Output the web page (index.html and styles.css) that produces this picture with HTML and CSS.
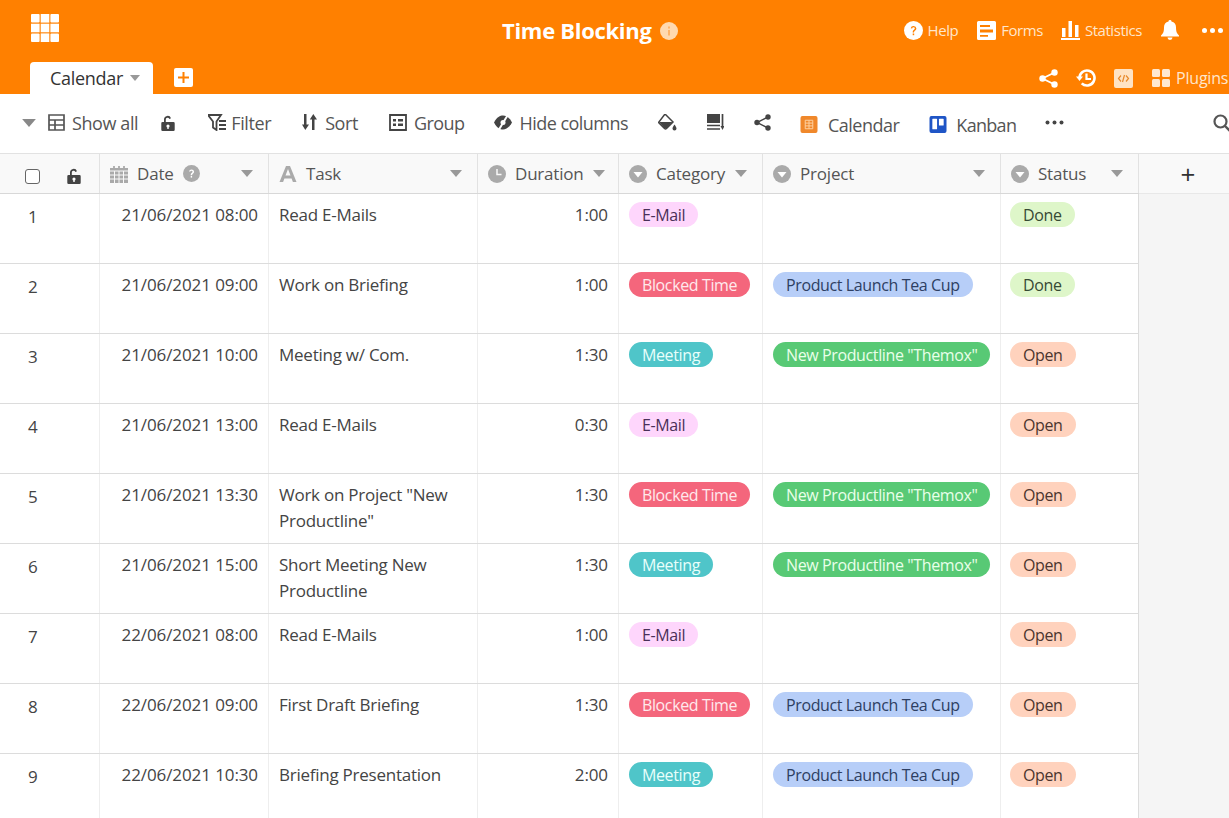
FILE: index.html
```html
<!DOCTYPE html>
<html lang="en">
<head>
<meta charset="utf-8">
<title>Time Blocking</title>
<link rel="stylesheet" href="styles.css">
</head>
<body>
<svg class="defs" width="0" height="0">
  <symbol id="caret" viewBox="0 0 12 7"><path d="M0 0h12L6 7z" fill="currentColor"/></symbol>
  <symbol id="single" viewBox="0 0 18 18"><circle cx="9" cy="9" r="9" fill="currentColor"/><path d="M4.500 7h9L9 12.500z" fill="#fff"/></symbol>
  <symbol id="lock" viewBox="0 0 14 16"><path d="M3 7V4.500a3.600 3.600 0 0 1 7-1.200l-1.700.6A1.800 1.800 0 0 0 4.800 4.500V7H12.500a1.200 1.200 0 0 1 1.200 1.200v6.600a1.200 1.200 0 0 1-1.200 1.200h-11A1.200 1.200 0 0 1 .3 14.800V8.200A1.200 1.200 0 0 1 1.500 7z" fill="currentColor"/><circle cx="7" cy="11" r="1.600" fill="#fff"/><rect x="6.300" y="11" width="1.400" height="3" fill="#fff"/></symbol>
</svg>

<header class="topbar">
  <div class="top-row">
    <svg class="app-grid" viewBox="0 0 28 28"><g fill="#fff"><rect width="8.600" height="8.600" rx="1"/><rect x="9.700" width="8.600" height="8.600"/><rect x="19.400" width="8.600" height="8.600" rx="1"/><rect y="9.700" width="8.600" height="8.600"/><rect x="9.700" y="9.700" width="8.600" height="8.600"/><rect x="19.400" y="9.700" width="8.600" height="8.600"/><rect y="19.400" width="8.600" height="8.600" rx="1"/><rect x="9.700" y="19.400" width="8.600" height="8.600"/><rect x="19.400" y="19.400" width="8.600" height="8.600" rx="1"/></g></svg>
    <h1 class="title">Time Blocking</h1>
    <svg class="title-info" viewBox="0 0 18 18"><circle cx="9" cy="9" r="9" fill="#ffd9b0"/><rect x="8" y="8" width="2" height="5.500" fill="#ffb469"/><rect x="8" y="4.500" width="2" height="2" fill="#ffb469"/></svg>
    <nav class="top-actions">
      <span class="act act-help"><svg class="ic-19" viewBox="0 0 19 19"><circle cx="9.500" cy="9.500" r="9.500" fill="#fff"/><path d="M6.700 7.300a2.900 2.900 0 0 1 5.700.3c0 2-2.400 2-2.400 4H8.700c0-2.800 2.100-2.800 2.100-4a1.300 1.300 0 0 0-2.600-.1z" fill="#ff8000"/><rect x="8.700" y="12.500" width="1.500" height="1.700" fill="#ff8000"/></svg>Help</span>
      <span class="act act-forms"><svg class="ic-19" viewBox="0 0 19 19"><path fill-rule="evenodd" d="M1.500 0h16A1.500 1.500 0 0 1 19 1.500v16a1.500 1.500 0 0 1-1.500 1.500h-16A1.500 1.500 0 0 1 0 17.500v-16A1.500 1.500 0 0 1 1.500 0zM3 4v2h10V4zM3 8.500v3h13v-3zM3 14v1.800h8V14z" fill="#fff"/></svg>Forms</span>
      <span class="act act-stats"><svg class="ic-19" viewBox="0 0 19 19"><g fill="#fff"><rect x="1" y="7" width="3.500" height="9"/><rect x="7.500" y="0" width="3.500" height="16"/><rect x="14" y="4" width="3.500" height="12"/><rect y="17" width="19" height="2"/></g></svg>Statistics</span>
      <svg class="bell" viewBox="0 0 18 20"><path d="M9 0a1.500 1.500 0 0 1 1.500 1.600A6 6 0 0 1 15 7.500c0 4.500 1 6 3 8v1H0v-1c2-2 3-3.500 3-8a6 6 0 0 1 4.500-5.900A1.500 1.500 0 0 1 9 0zM6.500 17.500h5a2.500 2.500 0 0 1-5 0z" fill="#fff"/></svg>
      <svg class="dots-w" viewBox="0 0 21 5"><g fill="#fff"><circle cx="2.500" cy="2.500" r="2.500"/><circle cx="10.500" cy="2.500" r="2.500"/><circle cx="18.500" cy="2.500" r="2.500"/></g></svg>
    </nav>
  </div>
  <div class="tab-row">
    <div class="tab">Calendar<svg class="tab-caret"><use href="#caret"/></svg></div>
    <svg class="tab-add" viewBox="0 0 19 19"><rect width="19" height="19" rx="2" fill="#fff"/><path d="M8.500 4h2v4.500H15v2h-4.500V15h-2v-4.500H4v-2h4.500z" fill="#ff8000"/></svg>
    <div class="tab-tools">
      <svg class="share-w" viewBox="0 0 19 19"><g fill="#fff"><circle cx="15.500" cy="3.500" r="3.200"/><circle cx="3.500" cy="9.500" r="3.200"/><circle cx="15.500" cy="15.500" r="3.200"/></g><path d="M15.500 3.500l-12 6 12 6" fill="none" stroke="#fff" stroke-width="1.800"/></svg>
      <svg class="hist-w" viewBox="0 0 20 20"><path d="M3.500 10a7.500 7.500 0 1 1 2.200 5.300" fill="none" stroke="#fff" stroke-width="2.600"/><path d="M0 8.500h7L3.500 13z" fill="#fff"/><path d="M10.500 5.500V11H15" fill="none" stroke="#fff" stroke-width="2.200"/></svg>
      <svg class="code-w" viewBox="0 0 19 19"><rect width="19" height="19" rx="2" fill="#ffe3c4"/><path d="M7 6.500L4.500 9.500 7 12.500M12 6.500l2.500 3-2.500 3M10.500 6l-2 7" fill="none" stroke="#e88a2c" stroke-width="1.200"/></svg>
      <span class="act act-plugins"><svg class="plug-w" viewBox="0 0 18 18"><g fill="#ffe8d0"><rect width="8" height="8" rx="1.500"/><rect x="10" width="8" height="8" rx="1.500"/><rect y="10" width="8" height="8" rx="1.500"/><rect x="10" y="10" width="8" height="8" rx="1.500"/></g></svg>Plugins</span>
    </div>
  </div>
</header>

<section class="toolbar">
  <svg class="tb-caret"><use href="#caret"/></svg>
  <span class="tool t-show"><svg class="tb-ic" viewBox="0 0 17 17"><path d="M1 1h15v15H1zM1 6h15M1 11h15M7 6v10" fill="none" stroke="currentColor" stroke-width="1.700"/></svg>Show all</span>
  <svg class="t-lock"><use href="#lock"/></svg>
  <span class="tool t-filter"><svg class="tb-ic-w" viewBox="0 0 18 17"><path d="M0 1h13L8.500 7.500V16L5 13.500V7.500z" fill="none" stroke="currentColor" stroke-width="1.800"/><path d="M11 7h7M11 11h7M11 15h7" stroke="currentColor" stroke-width="2"/></svg>Filter</span>
  <span class="tool t-sort"><svg class="tb-ic-s" viewBox="0 0 15 17"><path d="M2 0h2.500v10.500H7L3.300 16 0 10.500h2zM10 16h2.500V5.500H15L11.300 0 7.800 5.500H10z" fill="currentColor"/></svg>Sort</span>
  <span class="tool t-group"><svg class="tb-ic-w" viewBox="0 0 18 17"><path d="M1 1h16v15H1z" fill="none" stroke="currentColor" stroke-width="1.800"/><path d="M4 5h3v2.500H4zM9 5h5v2.500H9zM4 9.500h3V12H4zM9 9.500h5V12H9z" fill="currentColor"/></svg>Group</span>
  <span class="tool t-hide"><svg class="tb-ic-w" viewBox="0 0 18 14"><path d="M0 7C3 1.500 6 0 9 0s6 1.500 9 7c-3 5.500-6 7-9 7S3 12.500 0 7z" fill="currentColor"/><path d="M13.500 0L5 14" stroke="#fff" stroke-width="2"/><circle cx="9" cy="7" r="2.500" fill="#fff"/></svg>Hide columns</span>
  <svg class="t-paint" viewBox="0 0 19 17"><path d="M7 0l8 8-6.500 6.500a1.500 1.500 0 0 1-2 0L.5 8.500z" fill="none" stroke="#444" stroke-width="1.500"/><path d="M1 8h13.500l-6 6.300a1.500 1.500 0 0 1-2 0z" fill="#444"/><path d="M16.500 10.500c1.300 2 2 3 2 4a2 2 0 0 1-4 0c0-1 .7-2 2-4z" fill="#444"/></svg>
  <svg class="t-rowh" viewBox="0 0 17 17"><rect width="13" height="9" fill="#444"/><path d="M0 11.500h13M0 15h13" stroke="#444" stroke-width="1.500"/><path d="M15.500 0v13" stroke="#444" stroke-width="1.700"/><path d="M13.500 12h4l-2 4z" fill="#444"/></svg>
  <svg class="t-share" viewBox="0 0 17 17"><g fill="#444"><circle cx="14" cy="3" r="2.700"/><circle cx="3" cy="8.500" r="2.700"/><circle cx="14" cy="14" r="2.700"/></g><path d="M14 3L3 8.500 14 14" fill="none" stroke="#444" stroke-width="1.400"/></svg>
  <span class="tool t-cal"><svg class="tb-ic-w" viewBox="0 0 18 18"><rect width="18" height="18" rx="2" fill="#f0882b"/><path d="M5 4.500h8v9H5zM9 4.500v9M5 7.500h8M5 10.500h8" fill="none" stroke="#ffd3a6" stroke-width="1"/></svg>Calendar</span>
  <span class="tool t-kan"><svg class="tb-ic-w" viewBox="0 0 18 18"><rect width="18" height="18" rx="2" fill="#1f55c6"/><rect x="3" y="3" width="5" height="11" rx=".6" fill="#fff"/><rect x="10" y="3" width="5" height="7" rx=".6" fill="#fff"/></svg>Kanban</span>
  <svg class="t-dots" viewBox="0 0 19 5"><g fill="#444"><circle cx="2.500" cy="2.500" r="2"/><circle cx="9.500" cy="2.500" r="2"/><circle cx="16.500" cy="2.500" r="2"/></g></svg>
  <svg class="t-search" viewBox="0 0 18 18"><circle cx="7.500" cy="7.500" r="6" fill="none" stroke="#555" stroke-width="2.200"/><path d="M12 12l5 5" stroke="#555" stroke-width="2.400"/></svg>
</section>

<main class="sheet">
  <div class="table">
    <div class="row head">
      <div class="hc hc-index"><span class="checkbox"></span><svg class="hc-lock"><use href="#lock"/></svg></div>
      <div class="hc"><svg class="hi" viewBox="0 0 18 18"><path d="M0 3h18v15H0z" fill="currentColor"/><path d="M4 1v3M9 1v3M14 1v3" stroke="currentColor" stroke-width="1.800"/><path d="M0 6h18M0 10h18M0 14h18M4.500 6v12M9 6v12M13.500 6v12" stroke="#f9f9f9" stroke-width="1"/></svg>Date<svg class="hq" viewBox="0 0 17 17"><circle cx="8.500" cy="8.500" r="8.500" fill="currentColor"/><path d="M6 6.500a2.600 2.600 0 0 1 5.100.2c0 1.800-2 1.800-2 3.500H7.700c0-2.500 1.900-2.500 1.900-3.500a1.200 1.200 0 0 0-2.300-.1z" fill="#fff"/><rect x="7.700" y="11" width="1.400" height="1.600" fill="#fff"/></svg><svg class="hc-caret"><use href="#caret"/></svg></div>
      <div class="hc"><svg class="hi" viewBox="0 0 18 18"><path d="M7 1h4l6.500 16h-3.600l-1.300-3.500H5.400L4.100 17H.5zM6.500 10.500h5L9 4z" fill="currentColor" fill-rule="evenodd"/></svg>Task<svg class="hc-caret"><use href="#caret"/></svg></div>
      <div class="hc"><svg class="hi" viewBox="0 0 18 18"><circle cx="9" cy="9" r="9" fill="currentColor"/><path d="M9 4v5.500h4.500" fill="none" stroke="#f9f9f9" stroke-width="1.500"/></svg>Duration<svg class="hc-caret"><use href="#caret"/></svg></div>
      <div class="hc"><svg class="hi"><use href="#single"/></svg>Category<svg class="hc-caret"><use href="#caret"/></svg></div>
      <div class="hc"><svg class="hi"><use href="#single"/></svg>Project<svg class="hc-caret"><use href="#caret"/></svg></div>
      <div class="hc"><svg class="hi"><use href="#single"/></svg>Status<svg class="hc-caret"><use href="#caret"/></svg></div>
    </div>

    <div class="row"><div class="c idx">1</div><div class="c date">21/06/2021 08:00</div><div class="c task">Read E-Mails</div><div class="c dur">1:00</div><div class="c"><span class="pill email">E-Mail</span></div><div class="c"></div><div class="c st"><span class="pill done">Done</span></div></div>
    <div class="row"><div class="c idx">2</div><div class="c date">21/06/2021 09:00</div><div class="c task">Work on Briefing</div><div class="c dur">1:00</div><div class="c"><span class="pill blocked">Blocked Time</span></div><div class="c"><span class="pill tea">Product Launch Tea Cup</span></div><div class="c st"><span class="pill done">Done</span></div></div>
    <div class="row"><div class="c idx">3</div><div class="c date">21/06/2021 10:00</div><div class="c task">Meeting w/ Com.</div><div class="c dur">1:30</div><div class="c"><span class="pill meeting">Meeting</span></div><div class="c"><span class="pill themox">New Productline "Themox"</span></div><div class="c st"><span class="pill open">Open</span></div></div>
    <div class="row"><div class="c idx">4</div><div class="c date">21/06/2021 13:00</div><div class="c task">Read E-Mails</div><div class="c dur">0:30</div><div class="c"><span class="pill email">E-Mail</span></div><div class="c"></div><div class="c st"><span class="pill open">Open</span></div></div>
    <div class="row"><div class="c idx">5</div><div class="c date">21/06/2021 13:30</div><div class="c task">Work on Project "New Productline"</div><div class="c dur">1:30</div><div class="c"><span class="pill blocked">Blocked Time</span></div><div class="c"><span class="pill themox">New Productline "Themox"</span></div><div class="c st"><span class="pill open">Open</span></div></div>
    <div class="row"><div class="c idx">6</div><div class="c date">21/06/2021 15:00</div><div class="c task">Short Meeting New Productline</div><div class="c dur">1:30</div><div class="c"><span class="pill meeting">Meeting</span></div><div class="c"><span class="pill themox">New Productline "Themox"</span></div><div class="c st"><span class="pill open">Open</span></div></div>
    <div class="row"><div class="c idx">7</div><div class="c date">22/06/2021 08:00</div><div class="c task">Read E-Mails</div><div class="c dur">1:00</div><div class="c"><span class="pill email">E-Mail</span></div><div class="c"></div><div class="c st"><span class="pill open">Open</span></div></div>
    <div class="row"><div class="c idx">8</div><div class="c date">22/06/2021 09:00</div><div class="c task">First Draft Briefing</div><div class="c dur">1:30</div><div class="c"><span class="pill blocked">Blocked Time</span></div><div class="c"><span class="pill tea">Product Launch Tea Cup</span></div><div class="c st"><span class="pill open">Open</span></div></div>
    <div class="row"><div class="c idx">9</div><div class="c date">22/06/2021 10:30</div><div class="c task">Briefing Presentation</div><div class="c dur">2:00</div><div class="c"><span class="pill meeting">Meeting</span></div><div class="c"><span class="pill tea">Product Launch Tea Cup</span></div><div class="c st"><span class="pill open">Open</span></div></div>
  </div>
  <aside class="add-col"><div class="add-head">+</div></aside>
</main>
</body>
</html>
```

FILE: styles.css
```css
* { box-sizing: border-box; }
html, body { margin: 0; height: 100%; overflow: hidden; }
body { font-family: "Open Sans", "Noto Sans", sans-serif; color: #444; background: #fff; width: 1229px; height: 818px; }
.defs { display: block; height: 0; }
svg { display: block; flex: none; }

/* top bar */
.topbar { height: 94px; background: #ff8000; color: #fff; overflow: hidden; }
.top-row { display: flex; align-items: flex-start; height: 62px; padding-left: 31px; }
.app-grid { width: 28px; height: 28px; margin-top: 14px; }
.title { margin: 15px 0 0 443px; font-size: 22px; line-height: 30px; font-weight: 700; letter-spacing: -.3px; white-space: nowrap; }
.title-info { width: 18px; height: 18px; margin: 22px 0 0 8px; }
.top-actions { display: flex; align-items: center; margin-left: 226px; height: 20px; margin-top: 20px; }
.act { display: flex; align-items: center; gap: 5px; font-size: 15px; color: #ffe6cc; letter-spacing: -.45px; white-space: nowrap; }
.ic-19 { width: 19px; height: 19px; }
.act-forms { margin-left: 19px; }
.act-stats { margin-left: 18px; }
.bell { width: 18px; height: 20px; margin-left: 19px; }
.dots-w { width: 21px; height: 5px; margin-left: 23px; }

.tab-row { display: flex; align-items: flex-end; height: 32px; padding-left: 30px; }
.tab { display: flex; align-items: center; width: 123px; height: 32px; padding-left: 20px; background: #fff; border-radius: 4px 4px 0 0; color: #333; font-size: 18px; letter-spacing: -.3px; }
.tab-caret { width: 10px; height: 6px; margin-left: 7px; color: #999; }
.tab-add { width: 19px; height: 19px; margin: 0 0 7px 21px; }
.tab-tools { display: flex; align-items: center; margin-left: 846px; height: 32px; white-space: nowrap; }
.share-w { width: 19px; height: 19px; }
.hist-w { width: 20px; height: 20px; margin-left: 18px; }
.code-w { width: 19px; height: 19px; margin-left: 18px; }
.act-plugins { margin-left: 19px; gap: 6px; font-size: 16px; letter-spacing: -.2px; }
.plug-w { width: 18px; height: 18px; }

/* toolbar */
.toolbar { display: flex; align-items: center; height: 59px; padding: 0 0 2px 22px; color: #555; font-size: 18px; letter-spacing: -.4px; white-space: nowrap; }
.tool { display: flex; align-items: center; gap: 7px; }
.tb-caret { width: 14px; height: 8px; color: #888; }
.tb-ic { width: 17px; height: 17px; }
.tb-ic-w { width: 18px; height: 17px; color: #444; }
.tb-ic-s { width: 15px; height: 17px; color: #444; }
.t-show { margin-left: 12px; }
.t-lock { width: 14px; height: 16px; margin-left: 23px; color: #444; }
.t-filter { margin-left: 33px; gap: 5px; }
.t-sort { margin-left: 31px; gap: 8px; }
.t-group { margin-left: 31px; letter-spacing: -.55px; }
.t-hide { margin-left: 29px; gap: 8px; letter-spacing: -.55px; }
.t-paint { width: 19px; height: 17px; margin-left: 30px; }
.t-rowh { width: 17px; height: 17px; margin-left: 30px; }
.t-share { width: 17px; height: 17px; margin-left: 30px; }
.t-cal { margin-left: 29px; gap: 10px; letter-spacing: -.5px; position: relative; top: 2px; }
.t-kan { margin-left: 30px; gap: 9px; letter-spacing: -.7px; position: relative; top: 2px; }
.t-dots { width: 19px; height: 5px; margin-left: 29px; }
.t-search { width: 18px; height: 18px; margin-left: 149px; }

/* table */
.sheet { display: flex; height: 665px; background: #f5f5f5; }
.table { width: 1139px; flex: none; background: #fff; }
.row { display: grid; grid-template-columns: 100px 169px 209px 141px 144px 238px 138px; height: 70px; border-bottom: 1px solid #dcdcdc; }
.row.head { height: 41px; border-top: 1px solid #e2e2e2; border-bottom: 1px solid #d8d8d8; background: #f9f9f9; }

.hc { display: flex; align-items: center; gap: 9px; padding: 0 15px 0 10px; border-right: 1px solid #e2e2e2; font-size: 17px; letter-spacing: -.2px; color: #555; white-space: nowrap; }
.hi { width: 18px; height: 18px; color: #aaa; }
.hq { width: 17px; height: 17px; color: #aaa; }
.hc-caret { width: 12px; height: 7px; margin-left: auto; color: #999; }
.hc-index { padding: 5px 0 0 25px; gap: 27px; }
.checkbox { width: 15px; height: 15px; border: 1px solid #666; border-radius: 3px; background: #fff; }
.hc-lock { width: 14px; height: 16px; color: #444; }

.c { padding: 8px 0 0 10px; border-right: 1px solid #eee; font-size: 17px; line-height: 26px; letter-spacing: -.1px; color: #444; }
.idx { padding: 10px 0 0 28px; }
.date { padding: 8px 10px 0 0; text-align: right; }
.task { letter-spacing: -.25px; }
.dur { padding: 8px 10px 0 0; text-align: right; }
.st { padding-left: 9px; }
.row > .c:last-child { border-right-color: #dcdcdc; }

.pill { display: inline-block; height: 25px; padding: 0 13px; border-radius: 13px; font-size: 16px; line-height: 27px; letter-spacing: -.38px; vertical-align: top; white-space: nowrap; }
.email { background: #fed6fc; color: #4a3058; }
.blocked { background: #f4667c; color: #ffe9ec; }
.meeting { background: #4fc5c9; color: #e8fffb; }
.tea { background: #b7cef8; color: #2e3f63; }
.themox { background: #58c975; color: #e9ffe9; }
.done { background: #def6c9; color: #374a34; }
.open { background: #ffd2bd; color: #4c352e; }

.add-col { flex: 1; }
.add-head { height: 41px; border-top: 1px solid #e2e2e2; border-bottom: 1px solid #e8e8e8; background: #f9f9f9; text-align: center; font-size: 26px; line-height: 40px; color: #333; padding-left: 8px; }
```
